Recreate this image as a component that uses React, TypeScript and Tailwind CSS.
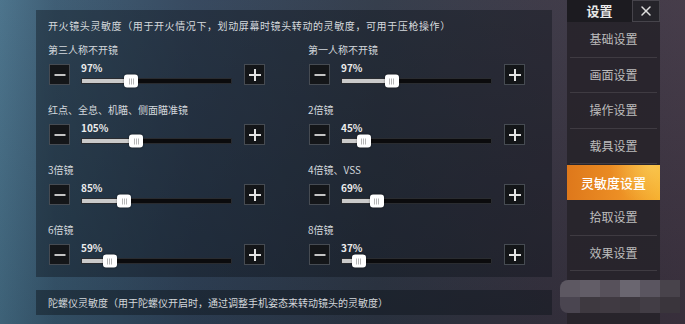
import { X } from "lucide-react";

type SliderItem = {
  label: string;
  value: string;
  pos: number;
};

const sliders: SliderItem[] = [
  { label: "第三人称不开镜", value: "97%", pos: 0.325 },
  { label: "第一人称不开镜", value: "97%", pos: 0.33 },
  { label: "红点、全息、机瞄、侧面瞄准镜", value: "105%", pos: 0.36 },
  { label: "2倍镜", value: "45%", pos: 0.145 },
  { label: "3倍镜", value: "85%", pos: 0.28 },
  { label: "4倍镜、VSS", value: "69%", pos: 0.23 },
  { label: "6倍镜", value: "59%", pos: 0.185 },
  { label: "8倍镜", value: "37%", pos: 0.11 },
];

const menu = ["基础设置", "画面设置", "操作设置", "载具设置", "灵敏度设置", "拾取设置", "效果设置"];

const mosaicTop = ["#5d5862", "#625d67", "#57515b", "#6a6670", "#5a5560", "#48434b"];
const mosaicBottom = ["#4a4550", "#3e3940", "#403a42", "#3d383f", "#423d45", "#3a353c"];

function StepButton({ kind }: { kind: "minus" | "plus" }) {
  return (
    <div className="relative mt-[2px] h-[21px] w-[21px] shrink-0 border border-[#464b52] bg-[#141619]">
      <div className="absolute left-1/2 top-1/2 h-[2px] w-[11px] -translate-x-1/2 -translate-y-1/2 bg-[#c4c4c4]" />
      {kind === "plus" && (
        <div className="absolute left-1/2 top-1/2 h-[12px] w-[2px] -translate-x-1/2 -translate-y-1/2 bg-[#e4e4e4]" />
      )}
      {kind === "plus" && (
        <div className="absolute left-1/2 top-1/2 h-[2px] w-[12px] -translate-x-1/2 -translate-y-1/2 bg-[#e4e4e4]" />
      )}
    </div>
  );
}

function Slider({ item }: { item: SliderItem }) {
  const trackWidth = 151;
  const center = item.pos * trackWidth;
  return (
    <div className="h-[43px]">
      <div className="h-[16px] text-[10px] leading-[16px] text-[#d3d8dd]">{item.label}</div>
      <div className="mt-[4px] flex h-[23px] items-start pl-[1px]">
        <StepButton kind="minus" />
        <div className="ml-[11px] w-[151px]">
          <div className="h-[12px] text-[10px] font-bold leading-[12px] text-[#ececec]">{item.value}</div>
          <div className="relative mt-[4px] h-[6px] rounded-[1px] border border-[#2a2c30] bg-[#0b0b0d]">
            <div className="absolute inset-y-0 left-0 bg-[#cacaca]" style={{ width: `${center}px` }} />
            <div
              className="absolute top-1/2 flex h-[13px] w-[14px] -translate-y-1/2 items-center justify-center gap-[1px] rounded-[3px] bg-white shadow-[0_0_2px_rgba(0,0,0,0.5)]"
              style={{ left: `${center - 7}px` }}
            >
              <div className="h-[6px] w-[1px] bg-[#b5b5b5]" />
              <div className="h-[6px] w-[1px] bg-[#b5b5b5]" />
              <div className="h-[6px] w-[1px] bg-[#b5b5b5]" />
            </div>
          </div>
        </div>
        <div className="ml-[12px]">
          <StepButton kind="plus" />
        </div>
      </div>
    </div>
  );
}

export default function App() {
  return (
    <div className="relative h-[324px] w-[685px] overflow-hidden bg-[linear-gradient(90deg,#466f88_0%,#385870_8%,#30435a_28%,#2e3746_55%,#383442_80%,#3f3543_100%)] font-['Noto_Sans_CJK_SC','Noto_Sans',sans-serif]">
      <div className="absolute inset-0 bg-[linear-gradient(180deg,rgba(255,255,255,0.04),rgba(0,0,0,0.12))]" />
      <div className="relative flex h-full">
        <div className="ml-[36px] mt-[10px] flex w-[516px] flex-col">
          <div className="h-[267px] bg-[#0c1219]/40 pl-[12px] pt-[8px]">
            <div className="h-[16px] text-[10px] leading-[16px] tracking-[0.6px] text-[#d6dade]">
              开火镜头灵敏度（用于开火情况下，划动屏幕时镜头转动的灵敏度，可用于压枪操作）
            </div>
            <div className="mt-[8px] grid grid-cols-[260px_1fr] gap-y-[17px]">
              {sliders.map((s) => (
                <Slider key={s.label} item={s} />
              ))}
            </div>
          </div>
          <div className="mt-[13px] h-[25px] bg-[#0e131a]/45 pl-[12px] text-[10px] leading-[25px] text-[#d3d7db]">
            陀螺仪灵敏度（用于陀螺仪开启时，通过调整手机姿态来转动镜头的灵敏度）
          </div>
        </div>

        <div className="ml-[15px] flex h-full w-[93px] flex-col bg-[#27232a]/90">
          <div className="flex h-[22px]">
            <div className="flex w-[65px] items-center justify-center bg-[#1c1b20] text-[13px] font-bold text-[#e8e8e8]">
              设置
            </div>
            <div className="flex w-[28px] items-center justify-center border border-[#46444b] bg-[#25242a]">
              <X size={16} strokeWidth={2.25} color="#dedede" />
            </div>
          </div>
          {menu.map((m) =>
            m === "灵敏度设置" ? (
              <div
                key={m}
                className="relative mt-[1px] flex h-[35px] items-center justify-center bg-[linear-gradient(90deg,#de781b_0%,#ec8e24_55%,#f6ae2c_100%)] text-[13px] font-medium text-white"
              >
                <div className="absolute inset-0 bg-[radial-gradient(circle_at_90%_0%,rgba(255,230,120,0.45),transparent_45%)]" />
                <span className="relative">{m}</span>
              </div>
            ) : (
              <div key={m} className="mx-[3px] flex h-[35.5px] items-center justify-center border-b border-[#3f3b42] text-[12px] text-[#bcbcbc]">
                {m}
              </div>
            )
          )}
        </div>
      </div>

      <div className="absolute left-[560px] top-[280px] grid w-[120px] grid-cols-6 overflow-hidden rounded-l-[8px]">
        {mosaicTop.map((c, i) => (
          <div key={`t${i}`} className="h-[17px]" style={{ backgroundColor: c }} />
        ))}
        {mosaicBottom.map((c, i) => (
          <div key={`b${i}`} className="h-[16px]" style={{ backgroundColor: c }} />
        ))}
      </div>
    </div>
  );
}
